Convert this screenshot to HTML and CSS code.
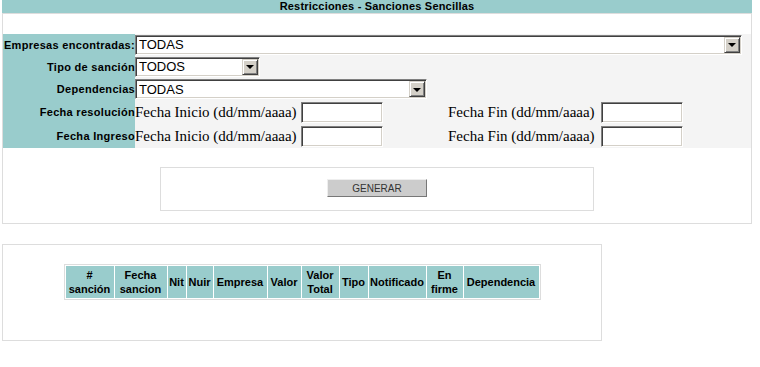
FILE: index.html
```html
<!DOCTYPE html>
<html lang="es">
<head>
  <meta charset="UTF-8" />
  <title>Restricciones - Sanciones Sencillas</title>
  <link rel="stylesheet" href="styles.css">
</head>
<body>
  <div class="page">
    <div class="title">Restricciones - Sanciones Sencillas</div>
    <div class="panel">
      <div class="filters">
        <div class="label">Empresas encontradas:</div>
        <div class="field">
          <div class="combo combo-empresa">
            <select><option>TODAS</option></select>
            <span class="arrow"></span>
          </div>
        </div>
        <div class="label">Tipo de sanción</div>
        <div class="field">
          <div class="combo combo-tipo">
            <select><option>TODOS</option></select>
            <span class="arrow"></span>
          </div>
        </div>
        <div class="label">Dependencias</div>
        <div class="field">
          <div class="combo combo-dep">
            <select><option>TODAS</option></select>
            <span class="arrow"></span>
          </div>
        </div>
        <div class="label">Fecha resolución</div>
        <div class="field dates">
          <div class="date">Fecha Inicio (dd/mm/aaaa) <input type="text"></div>
          <div class="date">Fecha Fin (dd/mm/aaaa) <input type="text"></div>
        </div>
        <div class="label">Fecha Ingreso</div>
        <div class="field dates">
          <div class="date">Fecha Inicio (dd/mm/aaaa) <input type="text"></div>
          <div class="date">Fecha Fin (dd/mm/aaaa) <input type="text"></div>
        </div>
      </div>
      <div class="actions">
        <button type="button">GENERAR</button>
      </div>
    </div>

    <div class="results">
      <table class="grid">
        <tr>
          <th class="c-num"># sanción</th>
          <th class="c-fecha">Fecha sancion</th>
          <th class="c-nit">Nit</th>
          <th class="c-nuir">Nuir</th>
          <th class="c-emp">Empresa</th>
          <th class="c-valor">Valor</th>
          <th class="c-total">Valor Total</th>
          <th class="c-tipo">Tipo</th>
          <th class="c-notif">Notificado</th>
          <th class="c-firme">En firme</th>
          <th class="c-dep">Dependencia</th>
        </tr>
      </table>
    </div>
  </div>
</body>
</html>
```

FILE: styles.css
```css
:root {
  --teal: #99cccc;
  --soft: #f4f4f4;
  --line: #dddddd;
  --face: #d4d0c8;
}
* { box-sizing: border-box; }
body {
  margin: 0;
  background: #fff;
  color: #000;
  font-family: 'Liberation Sans', Arial, sans-serif;
}
.page {
  width: 750px;
  margin-left: 2px;
}
.title {
  height: 13px;
  line-height: 13px;
  background: var(--teal);
  font-size: 11px;
  font-weight: bold;
  text-align: center;
  letter-spacing: 0.2px;
}
.panel {
  border: 1px solid var(--line);
  padding: 20px 0 12px;
}
.filters {
  display: grid;
  grid-template-columns: 132px 1fr;
  grid-template-rows: 21px 23px 22px 24px 24px;
}
.label {
  background: var(--teal);
  font-size: 11px;
  font-weight: bold;
  text-align: right;
  display: flex;
  align-items: center;
  justify-content: flex-end;
  letter-spacing: 0.3px;
}
.field {
  background: var(--soft);
  display: flex;
  align-items: center;
}

/* viejo combo estilo windows */
.combo {
  display: flex;
  height: 20px;
  background: #fff;
  border: 1px solid;
  border-color: #808080 #fff #fff #808080;
  box-shadow: inset 1px 1px 0 #404040, inset -1px -1px 0 var(--face);
  padding: 1px;
}
.combo-empresa { width: 607px; }
.combo-tipo { width: 125px; }
.combo-dep { width: 292px; }
.combo select {
  flex: 1;
  appearance: none;
  -webkit-appearance: none;
  border: none;
  background: transparent;
  font-family: 'Liberation Sans', Arial, sans-serif;
  font-size: 13px;
  padding: 0 2px;
  margin: 0;
  outline: none;
  color: #000;
}
.arrow {
  width: 16px;
  background: var(--face);
  border: 1px solid;
  border-color: var(--face) #404040 #404040 var(--face);
  box-shadow: inset 1px 1px 0 #fff, inset -1px -1px 0 #808080;
  display: flex;
  align-items: center;
  justify-content: center;
}
.arrow::after {
  content: "";
  border-left: 4px solid transparent;
  border-right: 4px solid transparent;
  border-top: 4px solid #000;
  margin-top: 1px;
}

.dates {
  display: grid;
  grid-template-columns: 313px auto;
  align-items: center;
}
.date {
  font-family: 'Liberation Serif', 'Times New Roman', serif;
  font-size: 15px;
  display: flex;
  align-items: center;
  gap: 4px;
  white-space: nowrap;
}
.date + .date { gap: 6px; }
.date input {
  width: 82px;
  height: 21px;
  margin: 0;
  padding: 0 2px;
  border: 1px solid;
  border-color: #808080 #fff #fff #808080;
  box-shadow: inset 1px 1px 0 #404040, inset -1px -1px 0 var(--face);
  background: #fff;
  outline: none;
}

.actions {
  width: 434px;
  height: 44px;
  margin: 19px 0 0 157px;
  border: 1px solid var(--line);
  display: flex;
  align-items: center;
  justify-content: center;
  padding-bottom: 2px;
}
.actions button {
  width: 100px;
  height: 18px;
  background: #cccccc;
  border: 1px solid;
  border-color: #eeeeee #777777 #777777 #eeeeee;
  font-family: 'Liberation Sans', Arial, sans-serif;
  font-size: 10px;
  color: #333;
  padding: 0;
  cursor: pointer;
}

.results {
  width: 600px;
  height: 97px;
  margin-top: 20px;
  border: 1px solid var(--line);
  padding-top: 19px;
}
.grid {
  margin: 0 auto;
  border: 1px solid var(--line);
  border-spacing: 1px;
  table-layout: fixed;
}
.grid th {
  background: var(--teal);
  font-size: 11px;
  font-weight: bold;
  line-height: 14px;
  padding: 2px 0;
  text-align: center;
  height: 32px;
}
.c-num { width: 48px; }
.c-fecha { width: 52px; }
.c-nit { width: 18px; }
.c-nuir { width: 26px; }
.c-emp { width: 53px; }
.c-valor { width: 33px; }
.c-total { width: 37px; }
.c-tipo { width: 28px; }
.c-notif { width: 57px; }
.c-firme { width: 36px; }
.c-dep { width: 75px; }
```
